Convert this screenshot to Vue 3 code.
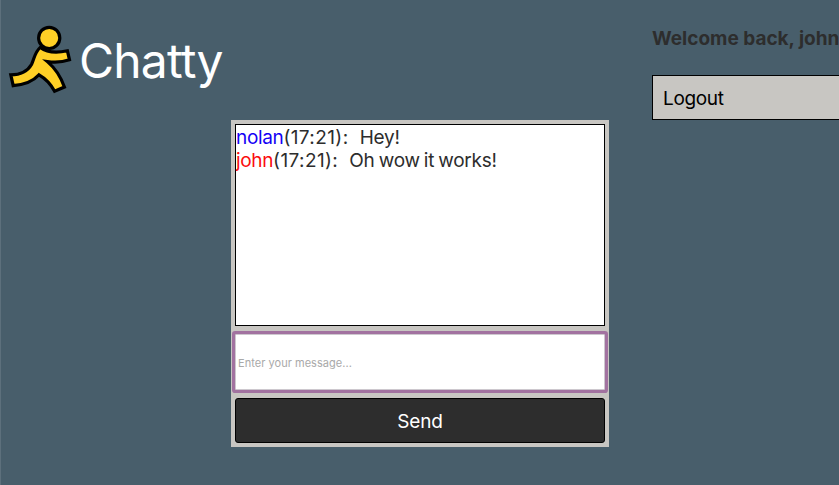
<script setup>
const messages = [
  { user: 'nolan', color: 'blue', time: '17:21', text: 'Hey!' },
  { user: 'john', color: 'red', time: '17:21', text: 'Oh wow it works!' },
]
</script>

<template>
  <div class="page">
    <header class="brand">
      <svg class="logo" viewBox="0 0 80 90" width="80" height="90">
        <g fill="#ffd026" stroke="#000" stroke-width="3.2" stroke-linejoin="miter">
          <path d="M40.3 32.4 C46 36.8 56 38.2 67.4 35.8 L69.5 44.8 C62 47.4 54 47.6 47.4 46.6 C55 53 60.5 61 64.4 72 L54.6 76.2 C50.5 68.5 45.5 63.5 39 59.8 C33.5 66 23.5 69.8 13.2 70.7 L10.8 59.8 C20 59.8 27.5 56.5 31.5 49.5 C34.5 43.5 34.5 37.5 40.3 32.4 Z" />
          <circle cx="49.2" cy="22.9" r="10.6" />
        </g>
      </svg>
      <h1 class="title">Chatty</h1>
    </header>
    <main class="chat">
      <div class="messages">
        <p v-for="m in messages" :key="m.user" class="message">
          <span class="user" :class="m.color">{{ m.user }}</span><span class="time">({{ m.time }}):&nbsp;</span> <span class="text">{{ m.text }}</span>
        </p>
      </div>
      <input class="entry" type="text" placeholder="Enter your message..." />
      <button class="send">Send</button>
    </main>
    <aside class="account">
      <strong class="welcome">Welcome back, john</strong>
      <button class="logout">Logout</button>
    </aside>
  </div>
</template>

<style>
body { margin: 0; background: #485e6b; overflow: hidden; }
</style>

<style scoped>
.page {
  display: grid;
  grid-template-columns: 230px 378px 230px;
  height: 485px;
  overflow: hidden;
  box-sizing: border-box;
  border-left: 1px solid #5d707c;
  background: #485e6b;
  color: #2d2d2d;
  font: 19px/23px Inter, "Liberation Sans", sans-serif;
}
.brand { display: flex; align-items: flex-start; padding-top: 15px; margin-left: -1px; }
.logo { flex: none; }
.title {
  margin: 17px 0 0 -1px;
  color: #fff;
  font-size: 48px;
  line-height: 58px;
  font-weight: 400;
  letter-spacing: -0.8px;
  font-feature-settings: "calt" 0, "liga" 0;
}
.chat {
  display: flex;
  flex-direction: column;
  box-sizing: border-box;
  height: 327px;
  margin-top: 120px;
  padding: 4px;
  background: #c8c6c2;
}
.messages {
  box-sizing: border-box;
  height: 202px;
  padding-top: 1px;
  border: 1px solid #000;
  background: #fff;
}
.message { margin: 0; white-space: nowrap; }
.user { letter-spacing: -0.35px; }
.time { letter-spacing: 0.4px; }
.text { letter-spacing: -0.25px; word-spacing: -1px; }
.blue { color: #1400f5; }
.red { color: #fb0d0d; }
.entry {
  box-sizing: border-box;
  height: 56px;
  margin: 8px 0;
  padding: 1px 2px 0;
  border: 1px solid #cdc8ce;
  outline: none;
  box-shadow: 0 0 0 3px #a272a0;
  border-radius: 1px;
  font: 11px Inter, "Liberation Sans", sans-serif;
  letter-spacing: 0.04px;
}
.entry::placeholder { color: #a9a9a9; opacity: 1; }
.send {
  height: 45px;
  padding: 2px 0 0;
  border: 1px solid #000;
  border-radius: 3px;
  background: #2d2d2d;
  color: #fff;
  font: inherit;
  letter-spacing: -0.2px;
}
.account { display: flex; flex-direction: column; padding: 27px 0 0 43px; }
.welcome { font-weight: 700; white-space: nowrap; }
.logout {
  width: 200px;
  height: 45px;
  margin-top: 25px;
  padding: 2px 10px 0;
  border: 1px solid #000;
  background: #c8c6c2;
  color: #000;
  font: inherit;
  letter-spacing: -0.35px;
  text-align: left;
}
</style>
